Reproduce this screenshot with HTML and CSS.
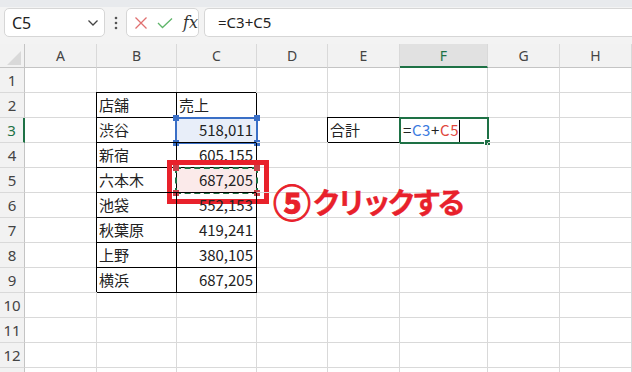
FILE: index.html
```html
<!DOCTYPE html>
<html lang="ja">

<head>
    <meta charset="UTF-8">
    <meta name="viewport" content="width=device-width, initial-scale=1.0">
    <link rel="stylesheet" href="styles.css">
    <title>Sheet</title>
</head>

<body>
    <div class="app">
        <div class="top-strip"></div>

        <!-- Formula bar -->
        <div class="toolbar">
            <div class="namebox">
                <span>C5</span>
                <svg class="chevron" width="12" height="8" viewBox="0 0 12 8">
                    <path d="M1.5 1.5 L6 6 L10.5 1.5" fill="none" stroke="#444" stroke-width="1.3"/>
                </svg>
            </div>
            <div class="more">
                <svg width="4" height="14" viewBox="0 0 4 14">
                    <circle cx="2" cy="2" r="1.3" fill="#555"/>
                    <circle cx="2" cy="7" r="1.3" fill="#555"/>
                    <circle cx="2" cy="12" r="1.3" fill="#555"/>
                </svg>
            </div>
            <div class="fxbox">
                <svg width="14" height="14" viewBox="0 0 14 14">
                    <path d="M1.5 1.5 L12.5 12.5 M12.5 1.5 L1.5 12.5" stroke="#e07070" stroke-width="1.3" fill="none"/>
                </svg>
                <svg width="16" height="12" viewBox="0 0 16 12">
                    <path d="M1 6 L5.5 10.5 L15 1.5" stroke="#5fb56a" stroke-width="1.3" fill="none"/>
                </svg>
                <span class="fx">fx</span>
            </div>
            <div class="formula">=C3+C5</div>
        </div>
        <div class="band"></div>

        <!-- Sheet -->
        <div class="sheet">
            <div class="corner">
                <svg width="25" height="24" viewBox="0 0 25 24">
                    <path d="M7 21 L21 21 L21 7 Z" fill="#d9d9d9"/>
                </svg>
            </div>
            <div class="ch">A</div><div class="ch">B</div><div class="ch">C</div><div class="ch">D</div>
            <div class="ch">E</div><div class="ch active-col">F</div><div class="ch">G</div><div class="ch">H</div>

            <div class="rh">1</div><div class="c"></div><div class="c"></div><div class="c"></div><div class="c"></div><div class="c"></div><div class="c"></div><div class="c"></div><div class="c"></div>

            <div class="rh">2</div><div class="c"></div><div class="c tb">店舗</div><div class="c tb">売上</div><div class="c"></div><div class="c"></div><div class="c"></div><div class="c"></div><div class="c"></div>

            <div class="rh active-row">3</div><div class="c"></div><div class="c tb">渋谷</div>
            <div class="c tb num ref-blue-cell">518,011
                <div class="ref-blue">
                    <i class="sq tl"></i><i class="sq tr"></i><i class="sq bl"></i><i class="sq br"></i>
                </div>
            </div>
            <div class="c"></div><div class="c tb">合計</div>
            <div class="c">
                <span class="edit">=<span class="r1">C3</span>+<span class="r2">C5</span><span class="caret"></span></span>
                <div class="active"><i class="handle"></i></div>
            </div>
            <div class="c"></div><div class="c"></div>

            <div class="rh">4</div><div class="c"></div><div class="c tb">新宿</div><div class="c tb num">605,155</div><div class="c"></div><div class="c"></div><div class="c"></div><div class="c"></div><div class="c"></div>

            <div class="rh">5</div><div class="c"></div><div class="c tb">六本木</div>
            <div class="c tb num ref-red-cell">687,205
                <div class="ref-red">
                    <i class="sq tl"></i><i class="sq tr"></i><i class="sq bl"></i><i class="sq br"></i>
                </div>
                <div class="mark"></div>
            </div>
            <div class="c"></div><div class="c"></div><div class="c"></div><div class="c"></div><div class="c"></div>

            <div class="rh">6</div><div class="c"></div><div class="c tb">池袋</div><div class="c tb num">552,153</div><div class="c"></div><div class="c"></div><div class="c"></div><div class="c"></div><div class="c"></div>

            <div class="rh">7</div><div class="c"></div><div class="c tb">秋葉原</div><div class="c tb num">419,241</div><div class="c"></div><div class="c"></div><div class="c"></div><div class="c"></div><div class="c"></div>

            <div class="rh">8</div><div class="c"></div><div class="c tb">上野</div><div class="c tb num">380,105</div><div class="c"></div><div class="c"></div><div class="c"></div><div class="c"></div><div class="c"></div>

            <div class="rh">9</div><div class="c"></div><div class="c tb">横浜</div><div class="c tb num">687,205</div><div class="c"></div><div class="c"></div><div class="c"></div><div class="c"></div><div class="c"></div>

            <div class="rh">10</div><div class="c"></div><div class="c"></div><div class="c"></div><div class="c"></div><div class="c"></div><div class="c"></div><div class="c"></div><div class="c"></div>

            <div class="rh">11</div><div class="c"></div><div class="c"></div><div class="c"></div><div class="c"></div><div class="c"></div><div class="c"></div><div class="c"></div><div class="c"></div>

            <div class="rh">12</div><div class="c"></div><div class="c"></div><div class="c"></div><div class="c"></div><div class="c"></div><div class="c"></div><div class="c"></div><div class="c"></div>

            <div class="rh"></div><div class="c"></div><div class="c"></div><div class="c"></div><div class="c"></div><div class="c"></div><div class="c"></div><div class="c"></div><div class="c"></div>

            <!-- Callout -->
            <div class="callout"><span class="step">⑤</span>クリックする</div>
        </div>
    </div>
</body>
</html>
```

FILE: styles.css
```css
body {
    margin: 0;
    background-color: #ffffff;
    font-family: "Noto Sans CJK JP", "Noto Sans", sans-serif;
    overflow: hidden;
}

.app {
    width: 632px;
    height: 372px;
    overflow: hidden;
    background-color: #f3f3f3;
}

.top-strip {
    height: 7px;
    background-color: #e8eaed;
}

/* Formula bar */
.toolbar {
    display: flex;
    align-items: center;
    height: 30px;
    padding-top: 1px;
    box-sizing: border-box;
}

.namebox {
    display: flex;
    align-items: center;
    justify-content: space-between;
    width: 101px;
    height: 29px;
    margin-left: 4px;
    padding: 0 5px 0 7px;
    box-sizing: border-box;
    background-color: #fff;
    border: 1px solid #d6d6d6;
    border-radius: 5px;
    font-family: "Noto Sans", sans-serif;
    font-size: 16px;
    color: #222;
}

.more {
    display: flex;
    justify-content: center;
    width: 21px;
}

.fxbox {
    display: flex;
    align-items: center;
    gap: 9px;
    width: 73px;
    height: 29px;
    padding-left: 7px;
    box-sizing: border-box;
    background-color: #fff;
    border: 1px solid #d6d6d6;
    border-radius: 5px;
}

.fx {
    font-family: "DejaVu Serif", "Liberation Serif", serif;
    font-style: italic;
    font-size: 16px;
    color: #333;
    margin-left: 1px;
}

.formula {
    flex: 1;
    height: 29px;
    margin-left: 5px;
    padding-left: 13px;
    box-sizing: border-box;
    background-color: #fff;
    border: 1px solid #d6d6d6;
    border-right: none;
    border-radius: 5px 0 0 5px;
    font-family: "Noto Sans", sans-serif;
    font-size: 15px;
    line-height: 27px;
    color: #222;
}

.band {
    height: 7px;
}

/* Sheet grid */
.sheet {
    position: relative;
    display: grid;
    grid-template-columns: 25px 72px 80px 80px 71px 72px 88px 72px 72px;
    grid-template-rows: 24px repeat(13, 25px);
    background-color: #fff;
}

.corner {
    background-color: #f2f2f2;
    border-right: 1px solid #c4c4c4;
    border-bottom: 1px solid #c4c4c4;
    box-sizing: border-box;
}

.corner svg {
    display: block;
}

.ch {
    background-color: #f2f2f2;
    border-right: 1px solid #d9d9d9;
    border-bottom: 1px solid #c4c4c4;
    box-sizing: border-box;
    text-align: center;
    font-family: "Noto Sans", sans-serif;
    font-size: 14px;
    line-height: 23px;
    color: #444;
}

.active-col {
    background-color: #e1e1e1;
    border-bottom: 2px solid #1e7145;
    color: #1e7145;
}

.rh {
    background-color: #f2f2f2;
    border-right: 1px solid #c4c4c4;
    border-bottom: 1px solid #d9d9d9;
    box-sizing: border-box;
    text-align: center;
    font-family: "Noto Sans", sans-serif;
    font-size: 15px;
    line-height: 24px;
    color: #444;
}

.active-row {
    border-right: 2px solid #1e7145;
    color: #1e7145;
}

.c {
    position: relative;
    border-right: 1px solid #d9d9d9;
    border-bottom: 1px solid #d9d9d9;
    box-sizing: border-box;
    padding: 0 3px 0 2px;
    font-size: 15px;
    line-height: 24px;
    color: #222;
    white-space: nowrap;
}

.tb {
    border-color: #000;
    box-shadow: -1px -1px 0 #000;
}

.num {
    text-align: right;
}

/* Referenced cells */
.ref-blue-cell {
    background-color: #e8eef9;
}

.ref-red-cell {
    background-color: #fbeaea;
}

.ref-blue {
    position: absolute;
    left: -2px;
    top: -1px;
    right: -2px;
    bottom: -2px;
    border: 2px solid #3a6fc6;
}

.ref-blue .sq {
    background-color: #3a6fc6;
}

.ref-red {
    position: absolute;
    left: -2px;
    top: -1px;
    right: -2px;
    bottom: -2px;
    border: 2px dashed #1e6e42;
}

.ref-red .sq {
    background-color: #c9424a;
}

.sq {
    position: absolute;
    width: 6px;
    height: 6px;
}

.tl { left: -4px; top: -4px; }
.tr { right: -4px; top: -4px; }
.bl { left: -4px; bottom: -4px; }
.br { right: -4px; bottom: -4px; }

.mark {
    position: absolute;
    left: -10px;
    top: -8px;
    right: -13px;
    bottom: -12px;
    border: 5px solid #e8212b;
}

/* Active cell being edited */
.edit {
    padding-left: 1px;
    letter-spacing: 0.6px;
}

.r1 {
    color: #3b7be0;
}

.r2 {
    color: #e0463c;
}

.caret {
    display: inline-block;
    width: 1px;
    height: 23px;
    vertical-align: middle;
    background-color: #000;
}

.active {
    position: absolute;
    left: -1px;
    top: -1px;
    right: -2px;
    bottom: -2px;
    border: 2px solid #1e7145;
}

.handle {
    position: absolute;
    right: -4px;
    bottom: -4px;
    width: 5px;
    height: 5px;
    background-color: #1e7145;
    border: 1px solid #fff;
}

/* Annotation */
.callout {
    position: absolute;
    left: 273px;
    top: 136px;
    font-size: 29px;
    font-weight: bold;
    line-height: 42px;
    color: #e8212b;
    letter-spacing: -4px;
    white-space: nowrap;
    -webkit-text-stroke: 0.4px #e8212b;
}

.step {
    font-size: 38px;
    letter-spacing: 0;
    margin-right: 1px;
    vertical-align: -3px;
    -webkit-text-stroke: 1px #e8212b;
}
```
